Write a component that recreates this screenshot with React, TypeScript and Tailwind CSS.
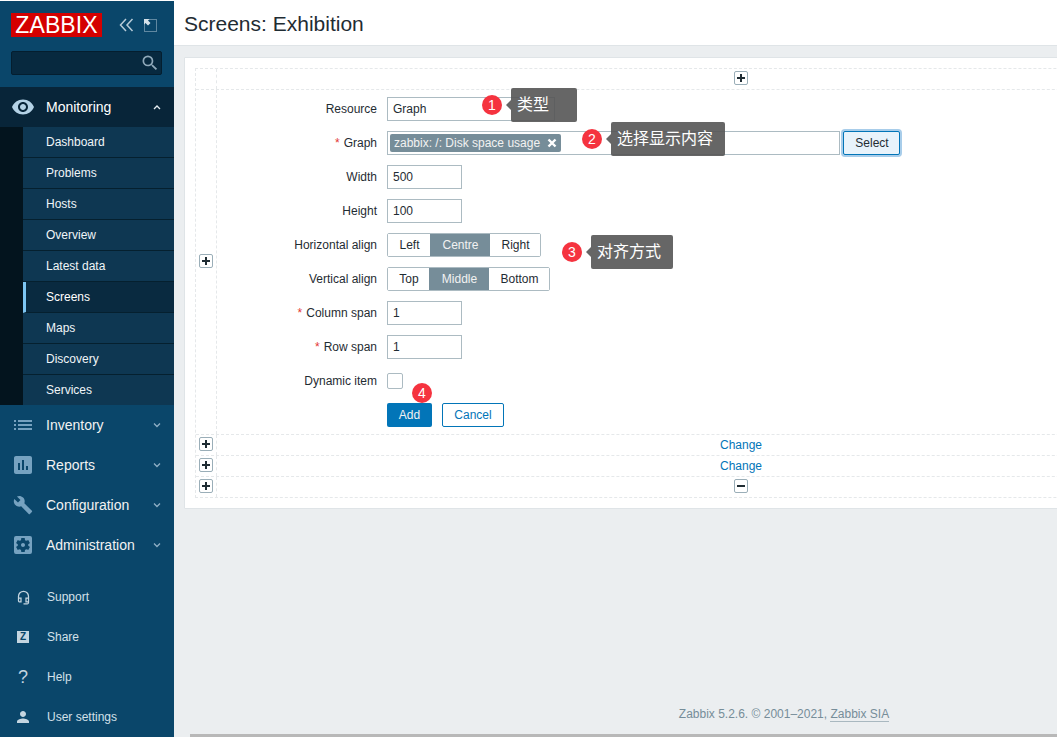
import type { ReactNode } from "react"
import {
  MdAssessment,
  MdBuild,
  MdList,
  MdOutlineHeadsetMic,
  MdPerson,
  MdSearch,
  MdSettingsApplications,
  MdVisibility,
} from "react-icons/md"

const font = "font-['Liberation_Sans','Noto_Sans_CJK_SC',sans-serif]"

const Chevron = ({ up }: { up?: boolean }) => (
  <svg width="8" height="6" viewBox="0 0 8 6" fill="none" stroke={up ? "#e6eef3" : "#8fb0c6"} strokeWidth="1.3">
    <path d={up ? "M1 5l3-3 3 3" : "M1 1.5l3 3 3-3"} />
  </svg>
)

const subItems = ["Dashboard", "Problems", "Hosts", "Overview", "Latest data", "Screens", "Maps", "Discovery", "Services"]

function MainItem({ icon, label }: { icon: ReactNode; label: string }) {
  return (
    <div className="flex h-10 items-center text-sm text-[#f2f2f2]">
      <div className="flex w-[46px] justify-center pr-[1px] text-[#76a2c0]">{icon}</div>
      <span className="flex-1">{label}</span>
      <div className="mr-[13px]">
        <Chevron />
      </div>
    </div>
  )
}

function BottomItem({ icon, label }: { icon: ReactNode; label: string }) {
  return (
    <div className="flex h-10 items-center text-xs text-[#d3e0e9]">
      <div className="flex w-[47px] justify-center pr-[1px] text-[#c4d5e0]">{icon}</div>
      <span>{label}</span>
    </div>
  )
}

function Sidebar() {
  return (
    <aside className="flex w-[174px] shrink-0 flex-col bg-[#0a466a]">
      <div className="flex items-center pl-[11px] pt-[12px]">
        <div className="flex h-[24px] w-[91px] items-center justify-center bg-[#d40000] text-[23px] leading-none tracking-[0.1px] text-white">
          ZABBIX
        </div>
        <svg className="ml-[17px]" width="15" height="14" viewBox="0 0 15 14" fill="none" stroke="#b7cbd8" strokeWidth="1.5">
          <path d="M7 1L1.5 7 7 13M13.5 1L8 7l5.500 6" />
        </svg>
        <svg className="ml-[10px]" width="13" height="13" viewBox="0 0 13 13" fill="none">
          <rect x="0.5" y="0.5" width="12" height="12" stroke="#b7cbd8" strokeDasharray="1 1" />
          <path d="M0 0h5.500L4 1.500 6.500 4 4 6.500 1.500 4 0 5.500z" fill="#d5e1e9" />
        </svg>
      </div>
      <div className="mx-[11px] mt-[14px] flex h-[24px] w-[151px] items-center justify-end rounded-[2px] border border-[#041e2f] bg-[#07293f] pr-[1px]">
        <MdSearch className="text-[#8fa9ba]" size={20} />
      </div>
      <div className="mt-[12px]">
        <div className="flex h-10 items-center bg-[#082539] text-sm text-white">
          <div className="flex w-[46px] justify-center pr-[1px] text-[#b4d2e6]">
            <MdVisibility size={24} />
          </div>
          <span className="flex-1">Monitoring</span>
          <div className="mr-[13px]">
            <Chevron up />
          </div>
        </div>
        <div className="bg-[#03141e] pl-[23px]">
          {subItems.map((item) => (
            <div
              key={item}
              className={`flex h-[31px] items-center border-b border-[#05202f] text-xs last:h-[30px] last:border-b-0 ${
                item === "Screens"
                  ? "border-l-[3px] border-l-[#7dc5f2] bg-[#092a40] pl-[20px] text-white"
                  : "bg-[#0e3752] pl-[23px] text-[#f0f5f8]"
              }`}
            >
              {item}
            </div>
          ))}
        </div>
      </div>
      <MainItem icon={<MdList size={24} />} label="Inventory" />
      <MainItem icon={<MdAssessment size={24} />} label="Reports" />
      <MainItem icon={<MdBuild size={20} />} label="Configuration" />
      <MainItem icon={<MdSettingsApplications size={24} />} label="Administration" />
      <div className="mt-[12px]">
        <BottomItem icon={<MdOutlineHeadsetMic size={15} />} label="Support" />
        <BottomItem
          icon={
            <div className="flex h-3 w-3 items-center justify-center bg-[#c4d5e0] text-[10px] font-bold leading-none text-[#0a466a]">
              Z
            </div>
          }
          label="Share"
        />
        <BottomItem icon={<span className="text-lg leading-none">?</span>} label="Help" />
        <BottomItem icon={<MdPerson size={18} />} label="User settings" />
      </div>
    </aside>
  )
}

function Plus({ minus }: { minus?: boolean }) {
  return (
    <div className="mb-[2px] flex h-[14px] w-[14px] items-center justify-center rounded-[2px] border border-[#9aaeb8] bg-white">
      <svg width="8" height="8" viewBox="0 0 8 8" fill="#1f2c33">
        {minus ? <rect y="3" width="8" height="2" /> : <path d="M3 0h2v3h3v2H5v3H3V5H0V3h3z" />}
      </svg>
    </div>
  )
}

function TableRow({ left, children, h }: { left?: ReactNode; children?: ReactNode; h: string }) {
  return (
    <div className={`flex border-b border-dashed border-[#e5e8ea] last:border-b-0 ${h}`}>
      <div className="flex w-[21px] shrink-0 items-center justify-center border-r border-dashed border-[#e5e8ea]">{left}</div>
      <div className="flex flex-1 items-center justify-center text-xs">{children}</div>
    </div>
  )
}

function FormRow({ label, required, children }: { label: string; required?: boolean; children: ReactNode }) {
  return (
    <div className="flex h-6 items-center gap-[10px]">
      <div className="w-[160px] text-right text-xs text-[#1f2c33]">
        {required && <span className="mr-[4px] text-[#e33734]">*</span>}
        {label}
      </div>
      {children}
    </div>
  )
}

const inputBox = "flex h-6 items-center border border-[#acbbc2] bg-white px-[5px] text-xs text-[#1f2c33]"

function Segmented({ items, active }: { items: [string, number][]; active: string }) {
  return (
    <div className="flex h-6 rounded-[2px] border border-[#acbbc2] text-xs text-[#1f2c33]">
      {items.map(([name, w]) => (
        <div
          key={name}
          style={{ width: w }}
          className={`flex items-center justify-center pl-[1px] ${name === active ? "bg-[#768d99] text-[#f2f2f2]" : "bg-white"}`}
        >
          {name}
        </div>
      ))}
    </div>
  )
}

function ScreenForm() {
  return (
    <div className="flex w-full flex-col gap-[10px] self-start pt-[7px]">
      <FormRow label="Resource">
        <div className={`${inputBox} w-[168px] justify-between`}>
          Graph
          <svg width="8" height="5" viewBox="0 0 8 5" fill="none" stroke="#1f2c33" strokeWidth="1.2">
            <path d="M1 1l3 3 3-3" />
          </svg>
        </div>
      </FormRow>
      <FormRow label="Graph" required>
        <div className="flex h-6 w-[453px] items-center border border-[#acbbc2] bg-white pl-[2px]">
          <div className="flex h-[18px] w-[171px] items-center justify-between rounded-[2px] bg-[#768d99] pl-[4px] pr-[4px] text-xs text-[#f2f2f2]">
            zabbix: /: Disk space usage
            <svg width="10" height="10" viewBox="0 0 10 10" stroke="#ffffff" strokeWidth="2.4">
              <path d="M1.500 1.500l7 7M8.500 1.500l-7 7" />
            </svg>
          </div>
        </div>
        <div className="ml-[-7px] flex h-[24px] w-[57px] items-center justify-center rounded-[2px] border border-[#0275b8] bg-[#e8f3fb] pl-[1px] text-xs text-[#1f2c33] shadow-[0_0_0_2px_#a8cdea]">
          Select
        </div>
      </FormRow>
      <FormRow label="Width">
        <div className={`${inputBox} w-[75px]`}>500</div>
      </FormRow>
      <FormRow label="Height">
        <div className={`${inputBox} w-[75px]`}>100</div>
      </FormRow>
      <FormRow label="Horizontal align">
        <Segmented items={[["Left", 42], ["Centre", 60], ["Right", 50]]} active="Centre" />
      </FormRow>
      <FormRow label="Vertical align">
        <Segmented items={[["Top", 41], ["Middle", 60], ["Bottom", 60]]} active="Middle" />
      </FormRow>
      <FormRow label="Column span" required>
        <div className={`${inputBox} w-[75px]`}>1</div>
      </FormRow>
      <FormRow label="Row span" required>
        <div className={`${inputBox} w-[75px]`}>1</div>
      </FormRow>
      <FormRow label="Dynamic item">
        <div className="h-4 w-4 rounded-[2px] border border-[#acbbc2] bg-white" />
      </FormRow>
      <div className="flex gap-[10px] pl-[170px]">
        <div className="flex h-6 w-[45px] items-center justify-center rounded-[2px] bg-[#0275b8] text-xs text-[#f2f2f2]">Add</div>
        <div className="flex h-6 w-[62px] items-center justify-center rounded-[2px] border border-[#0275b8] bg-white text-xs text-[#0275b8]">Cancel</div>
      </div>
    </div>
  )
}

function Note({ n, text, x, y, w }: { n: number; text: string; x: number; y: number; w: number }) {
  return (
    <div className="absolute flex items-center" style={{ left: x, top: y }}>
      <div className="flex h-5 w-5 items-center justify-center rounded-full bg-[#f5333f] text-sm leading-none text-white">{n}</div>
      <div className="ml-[4px] h-0 w-0 border-y-[5px] border-r-[5px] border-y-transparent border-r-[#666666]" />
      <div
        style={{ width: w }}
        className="flex h-[34px] items-center rounded-[2px] bg-[#555555]/90 pl-[6px] text-base leading-none text-white"
      >
        {text}
      </div>
    </div>
  )
}

export default function App() {
  return (
    <div className={`relative flex h-[737px] w-[1057px] overflow-hidden bg-white pt-px ${font}`}>
      <Sidebar />
      <main className="flex min-w-0 flex-1 flex-col overflow-hidden bg-[#ebeef0]">
        <header className="flex h-[45px] shrink-0 items-center border-b border-[#dfe4e7] bg-white pl-[10px] pt-[1px] text-[21px] text-[#1f2c33]">
          Screens: Exhibition
        </header>
        <div className="flex-1 pl-[10px] pt-[11px]">
          <div className="w-[1093px] rounded-[1px] border border-[#dfe4e7] bg-white p-[10px]">
            <div className="border border-dashed border-[#e5e8ea]">
              <TableRow h="h-[21px]">
                <Plus />
              </TableRow>
              <TableRow h="h-[345px]" left={<Plus />}>
                <ScreenForm />
              </TableRow>
              <TableRow h="h-[21px]" left={<Plus />}>
                <span className="text-[#0275b8]">Change</span>
              </TableRow>
              <TableRow h="h-[21px]" left={<Plus />}>
                <span className="text-[#0275b8]">Change</span>
              </TableRow>
              <TableRow h="h-[20px]" left={<Plus />}>
                <Plus minus />
              </TableRow>
            </div>
          </div>
        </div>
        <footer className="w-[1220px] shrink-0 pb-[12px] text-center text-xs text-[#768d99]">
          Zabbix 5.2.6. © 2001–2021, <span className="border-b border-[#a9b8c0]">Zabbix SIA</span>
        </footer>
        <div className="ml-[16px] h-[3px] shrink-0 bg-[#b8b8b8]" />
      </main>
      <Note n={1} text="类型" x={482} y={88} w={66} />
      <Note n={2} text="选择显示内容" x={582} y={122} w={114} />
      <Note n={3} text="对齐方式" x={562} y={235} w={82} />
      <div className="absolute left-[412px] top-[383px] flex h-5 w-5 items-center justify-center rounded-full bg-[#f5333f] text-sm leading-none text-white">
        4
      </div>
    </div>
  )
}
